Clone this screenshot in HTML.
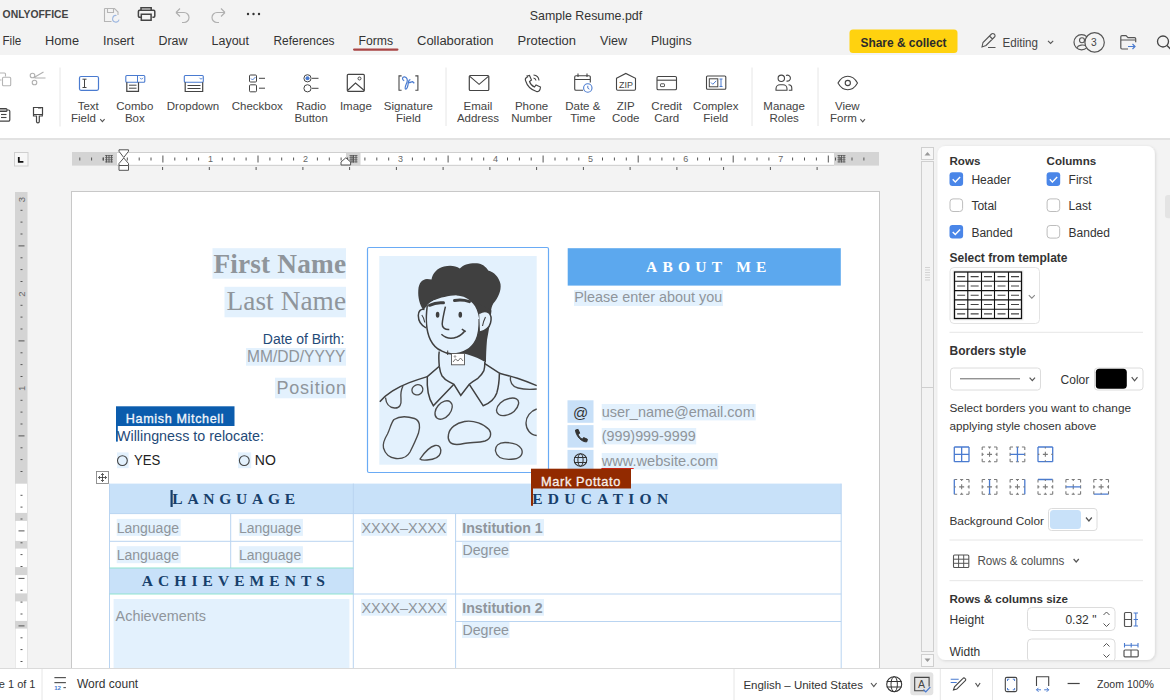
<!DOCTYPE html>
<html><head><meta charset="utf-8"><title>Sample Resume.pdf</title>
<style>
html,body{margin:0;padding:0;width:1170px;height:700px;overflow:hidden;background:#f3f3f3}
svg{display:block;font-family:"Liberation Sans",sans-serif}
</style></head><body>
<svg width="1170" height="700" viewBox="0 0 1170 700">
<rect x="0" y="0" width="1170" height="55" fill="#f3f3f3"/>
<rect x="0" y="55" width="1170" height="83" fill="#fff"/>
<rect x="0" y="138" width="1170" height="2" fill="#e2e2e2"/>
<rect x="0" y="140" width="1170" height="528" fill="#f3f3f3"/>
<text x="2.6" y="18" font-size="10.6" fill="#444" font-weight="bold" textLength="65.8" lengthAdjust="spacingAndGlyphs">ONLYOFFICE</text>
<path d="M104.5,8.5 h10 l3.5,3.5 v3 M104.5,8.5 v13 h7 M107.5,8.5 v4 h6 v-4" fill="none" stroke="#b5b5b5" stroke-width="1.1"/>
<path d="M116.5,15.5 a3.3,3.3 0 1 0 2.6,4.2" fill="none" stroke="#9db7e0" stroke-width="1.1"/>
<path d="M141,10.5 v-2.8 h10.2 v2.8 M140.8,17.3 h-1.2 a1.2,1.2 0 0 1 -1.2,-1.2 v-4.6 a1.2,1.2 0 0 1 1.2,-1.2 h14 a1.2,1.2 0 0 1 1.2,1.2 v4.6 a1.2,1.2 0 0 1 -1.2,1.2 h-1.2 M141.3,14.2 h9.8 v6.1 h-9.8 z" fill="none" stroke="#444" stroke-width="1.5"/>
<path d="M176,12.5 l4,-4 M176,12.5 l4,4 M176,12.5 h8 a5,5 0 0 1 0,10 h-2" fill="none" stroke="#b0b0b0" stroke-width="1.2"/>
<path d="M225,12.5 l-4,-4 M225,12.5 l-4,4 M225,12.5 h-8 a5,5 0 0 0 0,10 h2" fill="none" stroke="#b0b0b0" stroke-width="1.2"/>
<circle cx="248" cy="14" r="1.2" fill="#333" stroke="none" stroke-width="1"/>
<circle cx="253.5" cy="14" r="1.2" fill="#333" stroke="none" stroke-width="1"/>
<circle cx="259" cy="14" r="1.2" fill="#333" stroke="none" stroke-width="1"/>
<text x="586" y="20" font-size="12.4" fill="#333" text-anchor="middle">Sample Resume.pdf</text>
<text x="2.5" y="44.6" font-size="12.5" fill="#333" textLength="18.8" lengthAdjust="spacingAndGlyphs">File</text>
<text x="45" y="44.6" font-size="12.5" fill="#333" textLength="34" lengthAdjust="spacingAndGlyphs">Home</text>
<text x="103" y="44.6" font-size="12.5" fill="#333" textLength="31.2" lengthAdjust="spacingAndGlyphs">Insert</text>
<text x="158.5" y="44.6" font-size="12.5" fill="#333" textLength="29" lengthAdjust="spacingAndGlyphs">Draw</text>
<text x="211.5" y="44.6" font-size="12.5" fill="#333" textLength="37.5" lengthAdjust="spacingAndGlyphs">Layout</text>
<text x="273.5" y="44.6" font-size="12.5" fill="#333" textLength="61" lengthAdjust="spacingAndGlyphs">References</text>
<text x="358.5" y="44.6" font-size="12.5" fill="#333" textLength="34.6" lengthAdjust="spacingAndGlyphs">Forms</text>
<text x="417" y="44.6" font-size="12.5" fill="#333" textLength="76.6" lengthAdjust="spacingAndGlyphs">Collaboration</text>
<text x="517.5" y="44.6" font-size="12.5" fill="#333" textLength="58.5" lengthAdjust="spacingAndGlyphs">Protection</text>
<text x="600" y="44.6" font-size="12.5" fill="#333" textLength="27" lengthAdjust="spacingAndGlyphs">View</text>
<text x="651" y="44.6" font-size="12.5" fill="#333" textLength="40.7" lengthAdjust="spacingAndGlyphs">Plugins</text>
<rect x="353" y="48.4" width="45.5" height="2.3" fill="#a94545" rx="1.1"/>
<rect x="849.5" y="29.5" width="108" height="23.5" fill="#ffd20f" rx="3.5"/>
<text x="903.5" y="46.5" font-size="12" fill="#2b2b2b" font-weight="bold" text-anchor="middle" textLength="86" lengthAdjust="spacingAndGlyphs">Share &amp; collect</text>
<path d="M982,47 l1,-4.5 l8.5,-8.5 a1.8,1.8 0 0 1 2.6,0 l0.4,0.4 a1.8,1.8 0 0 1 0,2.6 l-8.5,8.5 z M989.5,36 l3,3 M988,47.5 h7.5" fill="none" stroke="#555" stroke-width="1.1"/>
<text x="1002.5" y="47.3" font-size="12" fill="#444" textLength="35.5" lengthAdjust="spacingAndGlyphs">Editing</text>
<path d="M1048,40.8 l2.6,2.6 l2.6,-2.6" fill="none" stroke="#555" stroke-width="1.1"/>
<circle cx="1081.6" cy="42.2" r="7.6" fill="none" stroke="#555" stroke-width="1.2"/>
<circle cx="1082" cy="40.2" r="2.5" fill="none" stroke="#555" stroke-width="1.1"/>
<path d="M1077,47.8 a5.5,3.6 0 0 1 9.5,-1.5" fill="none" stroke="#555" stroke-width="1.1"/>
<circle cx="1094.6" cy="42.4" r="9.7" fill="#f3f3f3" stroke="#555" stroke-width="1.2"/>
<text x="1093.8" y="45.8" font-size="10.2" fill="#444" text-anchor="middle">3</text>
<path d="M1128,49 h-6 a1.2,1.2 0 0 1 -1.2,-1.2 v-11 a1.2,1.2 0 0 1 1.2,-1.2 h4 l2,2 h6.5 a1.2,1.2 0 0 1 1.2,1.2 v3.5 M1121,40 h14" fill="none" stroke="#555" stroke-width="1.2"/>
<path d="M1128,46.5 h7 M1132.5,44 l2.5,2.5 l-2.5,2.5" fill="none" stroke="#4a7bd0" stroke-width="1.2"/>
<circle cx="1163" cy="41.5" r="5.5" fill="none" stroke="#444" stroke-width="1.3"/>
<line x1="1167" y1="45.5" x2="1171" y2="49.5" stroke="#444" stroke-width="1.3"/>
<path d="M0,73 h4.5 a1,1 0 0 1 1,1 v2.5" fill="none" stroke="#b5b5b5" stroke-width="1.1"/>
<rect x="2.5" y="77.2" width="8.2" height="8.5" fill="none" stroke="#b5b5b5" stroke-width="1.1" rx="1"/>
<line x1="0" y1="80" x2="1.5" y2="80" stroke="#b5b5b5" stroke-width="1"/>
<circle cx="32.5" cy="75.5" r="2.3" fill="none" stroke="#b0b0b0" stroke-width="1.1"/>
<circle cx="34.5" cy="82.5" r="2.3" fill="none" stroke="#b0b0b0" stroke-width="1.1"/>
<path d="M34,77.5 l9.5,-5.5 M34.5,78 h11" fill="none" stroke="#b0b0b0" stroke-width="1.1"/>
<path d="M0,110 h8.5 a1.3,1.3 0 0 1 1.3,1.3 v8.5 a1.3,1.3 0 0 1 -1.3,1.3 h-8.5" fill="none" stroke="#444" stroke-width="1.2"/>
<rect x="-1" y="108.5" width="8" height="3" fill="none" stroke="#444" stroke-width="1.1" rx="1"/>
<line x1="1" y1="114.5" x2="6.5" y2="114.5" stroke="#444" stroke-width="1.1"/>
<line x1="1" y1="117.5" x2="6.5" y2="117.5" stroke="#444" stroke-width="1.1"/>
<path d="M33.5,107.5 h9 v7 h-9 z M33.5,114.5 v1.5 h3 v5.5 a1.4,1.4 0 0 0 2.8,0 v-5.5 h3 v-1.5" fill="none" stroke="#444" stroke-width="1.2"/>
<path d="M38,108.5 l3.5,0" fill="none" stroke="#888" stroke-width="0.8"/>
<line x1="60" y1="67.5" x2="60" y2="126.5" stroke="#e6e6e6" stroke-width="1"/>
<line x1="446" y1="67.5" x2="446" y2="126" stroke="#e6e6e6" stroke-width="1"/>
<line x1="752" y1="67.5" x2="752" y2="126" stroke="#e6e6e6" stroke-width="1"/>
<line x1="818" y1="67.5" x2="818" y2="126" stroke="#e6e6e6" stroke-width="1"/>
<rect x="79.5" y="76.5" width="19" height="13.8" fill="none" stroke="#4a7bd0" stroke-width="1.2" rx="1.5"/>
<path d="M82.5,79.2 h4 M84.5,79.2 v8.3 M82.5,87.5 h4" fill="none" stroke="#444" stroke-width="1"/>
<rect x="125.8" y="75.5" width="19" height="6.7" fill="none" stroke="#4a7bd0" stroke-width="1.1" rx="1"/>
<line x1="137.5" y1="75.5" x2="137.5" y2="82.2" stroke="#4a7bd0" stroke-width="1"/>
<path d="M140,77.8 l1.5,1.5 l1.5,-1.5" fill="none" stroke="#4a7bd0" stroke-width="0.9"/>
<path d="M126.8,82.2 v9.2 h11.7 v-9.2" fill="none" stroke="#444" stroke-width="1.2"/>
<line x1="129" y1="85.2" x2="136.5" y2="85.2" stroke="#444" stroke-width="1"/>
<line x1="129" y1="88.2" x2="136.5" y2="88.2" stroke="#444" stroke-width="1"/>
<rect x="184.3" y="75.5" width="19" height="6.8" fill="none" stroke="#4a7bd0" stroke-width="1.1" rx="1"/>
<path d="M199.5,77.8 l1.5,1.5 l1.5,-1.5" fill="none" stroke="#4a7bd0" stroke-width="0.9"/>
<path d="M185.2,82.3 v9.2 h17.5 v-9.2" fill="none" stroke="#444" stroke-width="1.2"/>
<line x1="187.5" y1="85.5" x2="200.5" y2="85.5" stroke="#444" stroke-width="1"/>
<line x1="187.5" y1="88.5" x2="200.5" y2="88.5" stroke="#444" stroke-width="1"/>
<rect x="249.5" y="75" width="7" height="7" fill="none" stroke="#444" stroke-width="1" rx="1"/>
<path d="M251,78.5 l1.5,1.5 l3,-3" fill="none" stroke="#4a7bd0" stroke-width="1"/>
<line x1="259" y1="78.3" x2="265" y2="78.3" stroke="#444" stroke-width="1"/>
<rect x="249.5" y="84.8" width="7" height="7" fill="none" stroke="#444" stroke-width="1" rx="1"/>
<line x1="259" y1="88.2" x2="265" y2="88.2" stroke="#444" stroke-width="1"/>
<circle cx="307.5" cy="78.3" r="3.6" fill="none" stroke="#444" stroke-width="1"/>
<circle cx="307.5" cy="78.3" r="2" fill="#4a7bd0" stroke="none" stroke-width="1"/>
<line x1="312" y1="78.3" x2="318.5" y2="78.3" stroke="#444" stroke-width="1"/>
<circle cx="307.5" cy="88.3" r="3.6" fill="none" stroke="#444" stroke-width="1"/>
<line x1="312" y1="88.3" x2="318.5" y2="88.3" stroke="#444" stroke-width="1"/>
<rect x="347.3" y="74.3" width="17" height="17" fill="none" stroke="#444" stroke-width="1.2" rx="1"/>
<path d="M347.5,90.5 l8,-7.5 l8.8,7.5" fill="none" stroke="#444" stroke-width="1.1"/>
<circle cx="359.5" cy="78.5" r="1.5" fill="none" stroke="#444" stroke-width="1"/>
<path d="M401.6,75.9 h-2.6 v14.3 h2.6 M415.3,75.9 h2.6 v14.3 h-2.6" fill="none" stroke="#4a4a4a" stroke-width="1.1"/>
<path d="M404.2,80.8 C401.8,79.8 402,76.6 404.6,76.9 C407,77.2 407.8,79.8 407,82.2 C406,85 404.4,88 405.4,89 C406.8,89.6 408,86.2 408.3,83 C408.6,80.6 409.4,79.2 410.4,80 M408.8,82.6 C410.4,82.8 411.4,81.6 412.6,81.7 L414.3,83.3" fill="none" stroke="#4a7bd0" stroke-width="1.2"/>
<rect x="469.3" y="75.5" width="19.5" height="15" fill="none" stroke="#444" stroke-width="1.2" rx="1"/>
<path d="M469.8,76.3 l9.3,8 l9.3,-8" fill="none" stroke="#444" stroke-width="1.1"/>
<path d="M527,76 l2.5,-0.5 l2,4.5 l-2,1.5 c0.8,2.5 2.5,4.5 5,5.5 l1.5,-2 l4.5,2 l-0.5,2.5 c-0.5,1.5 -2,2.5 -3.5,2 c-5,-1.5 -9.5,-6 -11,-11 c-0.5,-1.5 0.5,-3 2,-3.5 z" fill="none" stroke="#444" stroke-width="1.1"/>
<path d="M533.5,75 a6,6 0 0 1 5.5,5.5 M533.5,78 a3,3 0 0 1 2.5,2.5" fill="none" stroke="#444" stroke-width="1.1"/>
<path d="M583,90.3 h-7 a1.3,1.3 0 0 1 -1.3,-1.3 v-12 a1.3,1.3 0 0 1 1.3,-1.3 h13 a1.3,1.3 0 0 1 1.3,1.3 v5.5 M574.7,79.5 h15.6 M578,73.5 v3.5 M587,73.5 v3.5" fill="none" stroke="#444" stroke-width="1.1"/>
<circle cx="587.8" cy="88" r="4.2" fill="#fff" stroke="#4a7bd0" stroke-width="1.1"/>
<path d="M587.8,85.8 v2.4 l1.6,1" fill="none" stroke="#4a7bd0" stroke-width="1"/>
<path d="M616.5,78.3 l9.3,-4.9 l9.7,4.9 v10.8 a1.2,1.2 0 0 1 -1.2,1.2 h-16.6 a1.2,1.2 0 0 1 -1.2,-1.2 z" fill="none" stroke="#444" stroke-width="1.1"/>
<text x="619.1" y="87.9" font-size="9" fill="#444" textLength="13.9" lengthAdjust="spacingAndGlyphs">ZIP</text>
<rect x="657" y="76.5" width="19.5" height="13.3" fill="none" stroke="#444" stroke-width="1.1" rx="1.3"/>
<line x1="657" y1="80.2" x2="676.5" y2="80.2" stroke="#444" stroke-width="1.1"/>
<rect x="660.5" y="83.8" width="4" height="2.8" fill="none" stroke="#444" stroke-width="0.9" rx="0.5"/>
<rect x="706.5" y="76" width="19.3" height="13.3" fill="none" stroke="#444" stroke-width="1.1" rx="1"/>
<rect x="709.3" y="78.8" width="8.5" height="8" fill="none" stroke="#444" stroke-width="1"/>
<path d="M711,82.5 l1.8,1.8 l3.5,-3.5" fill="none" stroke="#4a7bd0" stroke-width="1"/>
<path d="M719.5,79 h3 M721,79 v7.5 M719.5,86.5 h3" fill="none" stroke="#4a7bd0" stroke-width="1"/>
<circle cx="781.3" cy="78.3" r="3.2" fill="none" stroke="#444" stroke-width="1.1"/>
<path d="M776,90.3 v-1.5 a4,4 0 0 1 4,-4 h3 a4,4 0 0 1 4,4 v1.5 z" fill="none" stroke="#444" stroke-width="1.1"/>
<path d="M786,75.5 a3,3 0 1 1 0.5,5.5 M788.5,84.8 a3.5,3.5 0 0 1 3.3,3.5 v2 h-3" fill="none" stroke="#444" stroke-width="1.1"/>
<path d="M838,83 c5,-9 14.5,-9 19.5,0 c-5,9 -14.5,9 -19.5,0 z" fill="none" stroke="#444" stroke-width="1.1"/>
<circle cx="847.8" cy="83" r="2.6" fill="none" stroke="#444" stroke-width="1.1"/>
<text x="88.2" y="110.0" font-size="11.5" fill="#444" text-anchor="middle">Text</text>
<text x="71" y="121.6" font-size="11.5" fill="#444">Field</text>
<path d="M100.2,119.2 l2.2,2.4 l2.2,-2.4" fill="none" stroke="#555" stroke-width="1.1"/>
<text x="134.8" y="110.0" font-size="11.5" fill="#444" text-anchor="middle">Combo</text>
<text x="134.8" y="121.6" font-size="11.5" fill="#444" text-anchor="middle">Box</text>
<text x="193" y="110.0" font-size="11.5" fill="#444" text-anchor="middle">Dropdown</text>
<text x="257.3" y="110.0" font-size="11.5" fill="#444" text-anchor="middle">Checkbox</text>
<text x="311.2" y="110.0" font-size="11.5" fill="#444" text-anchor="middle">Radio</text>
<text x="311.2" y="121.6" font-size="11.5" fill="#444" text-anchor="middle">Button</text>
<text x="355.9" y="110.0" font-size="11.5" fill="#444" text-anchor="middle">Image</text>
<text x="408.4" y="110.0" font-size="11.5" fill="#444" text-anchor="middle">Signature</text>
<text x="408.4" y="121.6" font-size="11.5" fill="#444" text-anchor="middle">Field</text>
<text x="478" y="110.0" font-size="11.5" fill="#444" text-anchor="middle">Email</text>
<text x="478" y="121.6" font-size="11.5" fill="#444" text-anchor="middle">Address</text>
<text x="531.6" y="110.0" font-size="11.5" fill="#444" text-anchor="middle">Phone</text>
<text x="531.6" y="121.6" font-size="11.5" fill="#444" text-anchor="middle">Number</text>
<text x="582.8" y="110.0" font-size="11.5" fill="#444" text-anchor="middle">Date &amp;</text>
<text x="582.8" y="121.6" font-size="11.5" fill="#444" text-anchor="middle">Time</text>
<text x="625.7" y="110.0" font-size="11.5" fill="#444" text-anchor="middle">ZIP</text>
<text x="625.7" y="121.6" font-size="11.5" fill="#444" text-anchor="middle">Code</text>
<text x="666.7" y="110.0" font-size="11.5" fill="#444" text-anchor="middle">Credit</text>
<text x="666.7" y="121.6" font-size="11.5" fill="#444" text-anchor="middle">Card</text>
<text x="715.8" y="110.0" font-size="11.5" fill="#444" text-anchor="middle">Complex</text>
<text x="715.8" y="121.6" font-size="11.5" fill="#444" text-anchor="middle">Field</text>
<text x="784.1" y="110.0" font-size="11.5" fill="#444" text-anchor="middle">Manage</text>
<text x="784.1" y="121.6" font-size="11.5" fill="#444" text-anchor="middle">Roles</text>
<text x="847.3" y="110.0" font-size="11.5" fill="#444" text-anchor="middle">View</text>
<text x="830" y="121.6" font-size="11.5" fill="#444">Form</text>
<path d="M860.4,119.2 l2.3,2.6 l2.3,-2.6" fill="none" stroke="#555" stroke-width="1.1"/>
<rect x="14.5" y="152.5" width="13.5" height="13.5" fill="#f7f7f7" stroke="#cfcfcf" stroke-width="1"/>
<path d="M18.8,157 v4.8 h4.6" fill="none" stroke="#111" stroke-width="1.8"/>
<rect x="72" y="152" width="807" height="13.6" fill="#d4d4d4"/>
<rect x="117" y="152.5" width="717" height="12.6" fill="#fff"/>
<line x1="117" y1="152.5" x2="834" y2="152.5" stroke="#cfcfcf" stroke-width="1"/>
<line x1="117" y1="165.3" x2="834" y2="165.3" stroke="#cfcfcf" stroke-width="1"/>
<rect x="346" y="152.5" width="14.5" height="12.6" fill="#d4d4d4"/>
<line x1="79.8" y1="157.5" x2="79.8" y2="160.5" stroke="#555" stroke-width="1"/>
<line x1="91.6" y1="157.5" x2="91.6" y2="160.5" stroke="#555" stroke-width="1"/>
<line x1="103.5" y1="157.5" x2="103.5" y2="160.5" stroke="#555" stroke-width="1"/>
<line x1="127.3" y1="157.5" x2="127.3" y2="160.5" stroke="#555" stroke-width="1"/>
<line x1="139.2" y1="157.5" x2="139.2" y2="160.5" stroke="#555" stroke-width="1"/>
<line x1="151.0" y1="157.5" x2="151.0" y2="160.5" stroke="#555" stroke-width="1"/>
<line x1="162.9" y1="155.5" x2="162.9" y2="162.5" stroke="#555" stroke-width="1"/>
<line x1="174.8" y1="157.5" x2="174.8" y2="160.5" stroke="#555" stroke-width="1"/>
<line x1="186.7" y1="157.5" x2="186.7" y2="160.5" stroke="#555" stroke-width="1"/>
<line x1="198.6" y1="157.5" x2="198.6" y2="160.5" stroke="#555" stroke-width="1"/>
<text x="210.4" y="162.2" font-size="9" fill="#666" text-anchor="middle">1</text>
<line x1="222.3" y1="157.5" x2="222.3" y2="160.5" stroke="#555" stroke-width="1"/>
<line x1="234.2" y1="157.5" x2="234.2" y2="160.5" stroke="#555" stroke-width="1"/>
<line x1="246.1" y1="157.5" x2="246.1" y2="160.5" stroke="#555" stroke-width="1"/>
<line x1="258.0" y1="155.5" x2="258.0" y2="162.5" stroke="#555" stroke-width="1"/>
<line x1="269.9" y1="157.5" x2="269.9" y2="160.5" stroke="#555" stroke-width="1"/>
<line x1="281.7" y1="157.5" x2="281.7" y2="160.5" stroke="#555" stroke-width="1"/>
<line x1="293.6" y1="157.5" x2="293.6" y2="160.5" stroke="#555" stroke-width="1"/>
<text x="305.5" y="162.2" font-size="9" fill="#666" text-anchor="middle">2</text>
<line x1="317.4" y1="157.5" x2="317.4" y2="160.5" stroke="#555" stroke-width="1"/>
<line x1="329.3" y1="157.5" x2="329.3" y2="160.5" stroke="#555" stroke-width="1"/>
<line x1="341.1" y1="157.5" x2="341.1" y2="160.5" stroke="#555" stroke-width="1"/>
<line x1="353.0" y1="155.5" x2="353.0" y2="162.5" stroke="#555" stroke-width="1"/>
<line x1="364.9" y1="157.5" x2="364.9" y2="160.5" stroke="#555" stroke-width="1"/>
<line x1="376.8" y1="157.5" x2="376.8" y2="160.5" stroke="#555" stroke-width="1"/>
<line x1="388.7" y1="157.5" x2="388.7" y2="160.5" stroke="#555" stroke-width="1"/>
<text x="400.5" y="162.2" font-size="9" fill="#666" text-anchor="middle">3</text>
<line x1="412.4" y1="157.5" x2="412.4" y2="160.5" stroke="#555" stroke-width="1"/>
<line x1="424.3" y1="157.5" x2="424.3" y2="160.5" stroke="#555" stroke-width="1"/>
<line x1="436.2" y1="157.5" x2="436.2" y2="160.5" stroke="#555" stroke-width="1"/>
<line x1="448.1" y1="155.5" x2="448.1" y2="162.5" stroke="#555" stroke-width="1"/>
<line x1="460.0" y1="157.5" x2="460.0" y2="160.5" stroke="#555" stroke-width="1"/>
<line x1="471.8" y1="157.5" x2="471.8" y2="160.5" stroke="#555" stroke-width="1"/>
<line x1="483.7" y1="157.5" x2="483.7" y2="160.5" stroke="#555" stroke-width="1"/>
<text x="495.6" y="162.2" font-size="9" fill="#666" text-anchor="middle">4</text>
<line x1="507.5" y1="157.5" x2="507.5" y2="160.5" stroke="#555" stroke-width="1"/>
<line x1="519.4" y1="157.5" x2="519.4" y2="160.5" stroke="#555" stroke-width="1"/>
<line x1="531.2" y1="157.5" x2="531.2" y2="160.5" stroke="#555" stroke-width="1"/>
<line x1="543.1" y1="155.5" x2="543.1" y2="162.5" stroke="#555" stroke-width="1"/>
<line x1="555.0" y1="157.5" x2="555.0" y2="160.5" stroke="#555" stroke-width="1"/>
<line x1="566.9" y1="157.5" x2="566.9" y2="160.5" stroke="#555" stroke-width="1"/>
<line x1="578.8" y1="157.5" x2="578.8" y2="160.5" stroke="#555" stroke-width="1"/>
<text x="590.6" y="162.2" font-size="9" fill="#666" text-anchor="middle">5</text>
<line x1="602.5" y1="157.5" x2="602.5" y2="160.5" stroke="#555" stroke-width="1"/>
<line x1="614.4" y1="157.5" x2="614.4" y2="160.5" stroke="#555" stroke-width="1"/>
<line x1="626.3" y1="157.5" x2="626.3" y2="160.5" stroke="#555" stroke-width="1"/>
<line x1="638.2" y1="155.5" x2="638.2" y2="162.5" stroke="#555" stroke-width="1"/>
<line x1="650.1" y1="157.5" x2="650.1" y2="160.5" stroke="#555" stroke-width="1"/>
<line x1="661.9" y1="157.5" x2="661.9" y2="160.5" stroke="#555" stroke-width="1"/>
<line x1="673.8" y1="157.5" x2="673.8" y2="160.5" stroke="#555" stroke-width="1"/>
<text x="685.7" y="162.2" font-size="9" fill="#666" text-anchor="middle">6</text>
<line x1="697.6" y1="157.5" x2="697.6" y2="160.5" stroke="#555" stroke-width="1"/>
<line x1="709.5" y1="157.5" x2="709.5" y2="160.5" stroke="#555" stroke-width="1"/>
<line x1="721.3" y1="157.5" x2="721.3" y2="160.5" stroke="#555" stroke-width="1"/>
<line x1="733.2" y1="155.5" x2="733.2" y2="162.5" stroke="#555" stroke-width="1"/>
<line x1="745.1" y1="157.5" x2="745.1" y2="160.5" stroke="#555" stroke-width="1"/>
<line x1="757.0" y1="157.5" x2="757.0" y2="160.5" stroke="#555" stroke-width="1"/>
<line x1="768.9" y1="157.5" x2="768.9" y2="160.5" stroke="#555" stroke-width="1"/>
<text x="780.8" y="162.2" font-size="9" fill="#666" text-anchor="middle">7</text>
<line x1="792.6" y1="157.5" x2="792.6" y2="160.5" stroke="#555" stroke-width="1"/>
<line x1="804.5" y1="157.5" x2="804.5" y2="160.5" stroke="#555" stroke-width="1"/>
<line x1="816.4" y1="157.5" x2="816.4" y2="160.5" stroke="#555" stroke-width="1"/>
<line x1="828.3" y1="155.5" x2="828.3" y2="162.5" stroke="#555" stroke-width="1"/>
<line x1="840.2" y1="157.5" x2="840.2" y2="160.5" stroke="#555" stroke-width="1"/>
<line x1="852.0" y1="157.5" x2="852.0" y2="160.5" stroke="#555" stroke-width="1"/>
<line x1="863.9" y1="157.5" x2="863.9" y2="160.5" stroke="#555" stroke-width="1"/>
<line x1="106.5" y1="155" x2="106.5" y2="162.5" stroke="#555" stroke-width="0.9"/>
<line x1="109.0" y1="155" x2="109.0" y2="162.5" stroke="#555" stroke-width="0.9"/>
<line x1="111.5" y1="155" x2="111.5" y2="162.5" stroke="#555" stroke-width="0.9"/>
<line x1="105" y1="155.6" x2="113" y2="155.6" stroke="#555" stroke-width="0.8"/>
<line x1="105" y1="157.7" x2="113" y2="157.7" stroke="#555" stroke-width="0.8"/>
<line x1="105" y1="159.79999999999998" x2="113" y2="159.79999999999998" stroke="#555" stroke-width="0.8"/>
<line x1="105" y1="161.9" x2="113" y2="161.9" stroke="#555" stroke-width="0.8"/>
<line x1="103" y1="157.5" x2="103" y2="160.5" stroke="#555" stroke-width="1"/>
<line x1="351.0" y1="155" x2="351.0" y2="162.5" stroke="#555" stroke-width="0.9"/>
<line x1="353.5" y1="155" x2="353.5" y2="162.5" stroke="#555" stroke-width="0.9"/>
<line x1="356.0" y1="155" x2="356.0" y2="162.5" stroke="#555" stroke-width="0.9"/>
<line x1="349.5" y1="155.6" x2="357.5" y2="155.6" stroke="#555" stroke-width="0.8"/>
<line x1="349.5" y1="157.7" x2="357.5" y2="157.7" stroke="#555" stroke-width="0.8"/>
<line x1="349.5" y1="159.79999999999998" x2="357.5" y2="159.79999999999998" stroke="#555" stroke-width="0.8"/>
<line x1="349.5" y1="161.9" x2="357.5" y2="161.9" stroke="#555" stroke-width="0.8"/>
<line x1="347.5" y1="157.5" x2="347.5" y2="160.5" stroke="#555" stroke-width="1"/>
<line x1="839.0" y1="155" x2="839.0" y2="162.5" stroke="#555" stroke-width="0.9"/>
<line x1="841.5" y1="155" x2="841.5" y2="162.5" stroke="#555" stroke-width="0.9"/>
<line x1="844.0" y1="155" x2="844.0" y2="162.5" stroke="#555" stroke-width="0.9"/>
<line x1="837.5" y1="155.6" x2="845.5" y2="155.6" stroke="#555" stroke-width="0.8"/>
<line x1="837.5" y1="157.7" x2="845.5" y2="157.7" stroke="#555" stroke-width="0.8"/>
<line x1="837.5" y1="159.79999999999998" x2="845.5" y2="159.79999999999998" stroke="#555" stroke-width="0.8"/>
<line x1="837.5" y1="161.9" x2="845.5" y2="161.9" stroke="#555" stroke-width="0.8"/>
<line x1="835.5" y1="157.5" x2="835.5" y2="160.5" stroke="#555" stroke-width="1"/>
<path d="M119,149.8 h9.5 v1.5 l-4.75,6.2 l-4.75,-6.2 z M119,163.5 l4.75,-5.5 l4.75,5.5 v2 h-9.5 z M119,165.5 v4.8 h9.5 v-4.8" fill="#fff" stroke="#555" stroke-width="1"/>
<path d="M341,165 v-3 l4.8,-4.2 l4.8,4.2 v3 z" fill="#fff" stroke="#555" stroke-width="1"/>
<line x1="162.6" y1="167" x2="162.6" y2="170" stroke="#555" stroke-width="1"/>
<line x1="209.3" y1="167" x2="209.3" y2="170" stroke="#555" stroke-width="1"/>
<line x1="256.1" y1="167" x2="256.1" y2="170" stroke="#555" stroke-width="1"/>
<line x1="302.9" y1="167" x2="302.9" y2="170" stroke="#555" stroke-width="1"/>
<line x1="349.6" y1="167" x2="349.6" y2="170" stroke="#555" stroke-width="1"/>
<line x1="396.4" y1="167" x2="396.4" y2="170" stroke="#555" stroke-width="1"/>
<line x1="443.1" y1="167" x2="443.1" y2="170" stroke="#555" stroke-width="1"/>
<line x1="489.9" y1="167" x2="489.9" y2="170" stroke="#555" stroke-width="1"/>
<line x1="536.6" y1="167" x2="536.6" y2="170" stroke="#555" stroke-width="1"/>
<line x1="583.4" y1="167" x2="583.4" y2="170" stroke="#555" stroke-width="1"/>
<line x1="630.1" y1="167" x2="630.1" y2="170" stroke="#555" stroke-width="1"/>
<line x1="676.9" y1="167" x2="676.9" y2="170" stroke="#555" stroke-width="1"/>
<line x1="723.6" y1="167" x2="723.6" y2="170" stroke="#555" stroke-width="1"/>
<line x1="770.4" y1="167" x2="770.4" y2="170" stroke="#555" stroke-width="1"/>
<line x1="817.1" y1="167" x2="817.1" y2="170" stroke="#555" stroke-width="1"/>
<rect x="15" y="192" width="12.5" height="476" fill="#d4d4d4"/>
<rect x="15.5" y="483.7" width="11.5" height="29.19999999999999" fill="#fff"/>
<rect x="15.5" y="520.9" width="11.5" height="20.0" fill="#fff"/>
<rect x="15.5" y="548.6" width="11.5" height="18.5" fill="#fff"/>
<rect x="15.5" y="575.1" width="11.5" height="18.299999999999955" fill="#fff"/>
<rect x="15.5" y="601.4" width="11.5" height="19.5" fill="#fff"/>
<rect x="15.5" y="628.6" width="11.5" height="39.39999999999998" fill="#fff"/>
<text x="21.3" y="199.5" font-size="9.5" fill="#666" text-anchor="middle" transform="rotate(-90 21.3 199.5)" dy="3.3">3</text>
<text x="21.3" y="294.2" font-size="9.5" fill="#666" text-anchor="middle" transform="rotate(-90 21.3 294.2)" dy="3.3">2</text>
<text x="21.3" y="388.4" font-size="9.5" fill="#666" text-anchor="middle" transform="rotate(-90 21.3 388.4)" dy="3.3">1</text>
<line x1="20.5" y1="471.5" x2="22.5" y2="471.5" stroke="#555" stroke-width="1"/>
<line x1="20.5" y1="459.6" x2="22.5" y2="459.6" stroke="#555" stroke-width="1"/>
<line x1="20.5" y1="447.8" x2="22.5" y2="447.8" stroke="#555" stroke-width="1"/>
<line x1="18.5" y1="435.9" x2="24.5" y2="435.9" stroke="#555" stroke-width="1"/>
<line x1="20.5" y1="424.0" x2="22.5" y2="424.0" stroke="#555" stroke-width="1"/>
<line x1="20.5" y1="412.1" x2="22.5" y2="412.1" stroke="#555" stroke-width="1"/>
<line x1="20.5" y1="400.3" x2="22.5" y2="400.3" stroke="#555" stroke-width="1"/>
<line x1="20.5" y1="376.5" x2="22.5" y2="376.5" stroke="#555" stroke-width="1"/>
<line x1="20.5" y1="364.6" x2="22.5" y2="364.6" stroke="#555" stroke-width="1"/>
<line x1="20.5" y1="352.8" x2="22.5" y2="352.8" stroke="#555" stroke-width="1"/>
<line x1="18.5" y1="340.9" x2="24.5" y2="340.9" stroke="#555" stroke-width="1"/>
<line x1="20.5" y1="329.0" x2="22.5" y2="329.0" stroke="#555" stroke-width="1"/>
<line x1="20.5" y1="317.1" x2="22.5" y2="317.1" stroke="#555" stroke-width="1"/>
<line x1="20.5" y1="305.3" x2="22.5" y2="305.3" stroke="#555" stroke-width="1"/>
<line x1="20.5" y1="281.5" x2="22.5" y2="281.5" stroke="#555" stroke-width="1"/>
<line x1="20.5" y1="269.6" x2="22.5" y2="269.6" stroke="#555" stroke-width="1"/>
<line x1="20.5" y1="257.8" x2="22.5" y2="257.8" stroke="#555" stroke-width="1"/>
<line x1="18.5" y1="245.9" x2="24.5" y2="245.9" stroke="#555" stroke-width="1"/>
<line x1="20.5" y1="234.0" x2="22.5" y2="234.0" stroke="#555" stroke-width="1"/>
<line x1="20.5" y1="222.1" x2="22.5" y2="222.1" stroke="#555" stroke-width="1"/>
<line x1="20.5" y1="210.3" x2="22.5" y2="210.3" stroke="#555" stroke-width="1"/>
<line x1="20.5" y1="495.3" x2="22.5" y2="495.3" stroke="#555" stroke-width="1"/>
<line x1="20.5" y1="507.1" x2="22.5" y2="507.1" stroke="#555" stroke-width="1"/>
<line x1="20.5" y1="519.0" x2="22.5" y2="519.0" stroke="#555" stroke-width="1"/>
<line x1="18.5" y1="530.9" x2="24.5" y2="530.9" stroke="#555" stroke-width="1"/>
<line x1="20.5" y1="542.8" x2="22.5" y2="542.8" stroke="#555" stroke-width="1"/>
<line x1="20.5" y1="554.6" x2="22.5" y2="554.6" stroke="#555" stroke-width="1"/>
<line x1="20.5" y1="566.5" x2="22.5" y2="566.5" stroke="#555" stroke-width="1"/>
<line x1="18.5" y1="578.4" x2="24.5" y2="578.4" stroke="#555" stroke-width="1"/>
<line x1="20.5" y1="590.3" x2="22.5" y2="590.3" stroke="#555" stroke-width="1"/>
<line x1="20.5" y1="602.1" x2="22.5" y2="602.1" stroke="#555" stroke-width="1"/>
<line x1="20.5" y1="614.0" x2="22.5" y2="614.0" stroke="#555" stroke-width="1"/>
<line x1="18.5" y1="625.9" x2="24.5" y2="625.9" stroke="#555" stroke-width="1"/>
<line x1="20.5" y1="637.8" x2="22.5" y2="637.8" stroke="#555" stroke-width="1"/>
<line x1="20.5" y1="649.6" x2="22.5" y2="649.6" stroke="#555" stroke-width="1"/>
<line x1="20.5" y1="661.5" x2="22.5" y2="661.5" stroke="#555" stroke-width="1"/>
<rect x="71.5" y="191.5" width="808" height="480" fill="#fff" stroke="#c8c8c8" stroke-width="1"/>
<rect x="212.5" y="248.2" width="133.5" height="30.5" fill="#e3f1fd"/>
<text x="346" y="272.8" font-size="27.3" fill="#8f959b" font-weight="bold" font-family="Liberation Serif" text-anchor="end" textLength="132.5" lengthAdjust="spacing">First Name</text>
<rect x="224.5" y="286.8" width="121.5" height="30.5" fill="#e3f1fd"/>
<text x="346" y="310.4" font-size="27.3" fill="#8f959b" font-family="Liberation Serif" text-anchor="end" textLength="119.5" lengthAdjust="spacing">Last Name</text>
<text x="344.5" y="343.8" font-size="14" fill="#1f4a78" text-anchor="end">Date of Birth:</text>
<rect x="246" y="348" width="100" height="17.7" fill="#e3f1fd"/>
<text x="345.5" y="361.7" font-size="15.8" fill="#8f959b" text-anchor="end" textLength="98.5" lengthAdjust="spacingAndGlyphs">MM/DD/YYYY</text>
<rect x="275" y="377.7" width="71" height="20.6" fill="#e3f1fd"/>
<text x="346" y="394" font-size="18" fill="#8f959b" text-anchor="end" textLength="69.5" lengthAdjust="spacing">Position</text>
<rect x="367.5" y="247.5" width="181" height="225" fill="#fff" stroke="#6aabf5" stroke-width="1.2" rx="1.5"/>
<rect x="379.3" y="256" width="157.4" height="208.7" fill="#e3f1fd"/>
<path d="M423.4,310 C419.5,305 417.8,297 418.3,290 C418.8,283 422,279.5 427,279 L431.5,279.5 C432.5,273 437.5,268 444,266.5 C450,265 455.5,265.5 459.8,268.6 C463,264.5 470,262.8 477,263.2 C482,263.8 486,266.5 488.2,270.5 C494,272 499,277 500.5,284 C501.5,291 498,298 493.3,303.6 C491.8,306.5 491.2,309 491,311.5 L479.2,319.3 L472.9,303.6 L456,295.5 L433.6,300.5 L427.3,305.2 Z" fill="#404040" stroke="none" stroke-width="1"/>
<path d="M470,300 L491.5,310.5 C490,322 489,330 487,340 C486.3,348 486,356 486,362.5 C479,358 471,355 458,352 L470,330 Z" fill="#404040" stroke="none" stroke-width="1"/>
<path d="M427.3,305.2 C426.5,312 426,319 426.5,324 C427,331 428.5,336 430.4,339.8 C433,345 437,349 441.4,350.8 C444.5,352.5 448,353.8 452,354 C458,354 463,352.5 467,350 C471,347.5 474,344 476,340 C478.5,335 479.5,329 479.2,319 C478,312 476,307 472.9,303.6 C468,298 464,296 456,295.5 C449,295.5 440,297.5 433.6,300.5 C430,302 428,304 427.3,305.2 Z" fill="#e3f1fd" stroke="none" stroke-width="1"/>
<path d="M427.3,305.2 C426.5,312 426,319 426.5,324 C427,331 428.5,336 430.4,339.8 C433,345 437,349 441.4,350.8 C444.5,352.5 448,353.8 452,354 C458,354 463,352.5 467,350 C471,347.5 474,344 476,340 C478.5,335 479.5,329 479.2,319" fill="none" stroke="#404040" stroke-width="1.5"/>
<path d="M424.5,309.5 C420.5,308.5 418.3,311.5 418.3,315.5 C418.3,320.5 420.5,325 426,327.8" fill="#e3f1fd" stroke="#404040" stroke-width="1.5"/>
<path d="M421.8,315 C423.5,317 424.3,320 424.8,322.5" fill="none" stroke="#404040" stroke-width="1.1"/>
<path d="M479.2,313.5 C482,311.5 486,311 488.5,312.5 C491,314.5 491.5,319 490.5,323 C489.5,327 486,330.5 480,332" fill="#e3f1fd" stroke="#404040" stroke-width="1.5"/>
<path d="M485.5,317 C484,320 483,323 482.5,326" fill="none" stroke="#404040" stroke-width="1.1"/>
<path d="M429.5,305.3 C434,303 439,302.3 443.5,302.8" fill="none" stroke="#404040" stroke-width="3" stroke-linecap="round"/>
<path d="M454.5,300.6 C459,299.8 465,300.2 469.5,301.6" fill="none" stroke="#404040" stroke-width="3" stroke-linecap="round"/>
<ellipse cx="437.6" cy="314.8" rx="1.8" ry="3" fill="#404040"/>
<ellipse cx="460.3" cy="314.8" rx="1.8" ry="3" fill="#404040"/>
<path d="M445.4,306.7 C444,313 442.5,319 442.2,324 C442,328 445.5,330 449.3,329.5" fill="none" stroke="#404040" stroke-width="1.5"/>
<path d="M441.4,334.3 C446,338.5 452,339 457,337 C460.5,335.5 463.5,333 465,330.5 M461.8,329.2 L465.8,331.6" fill="none" stroke="#404040" stroke-width="1.5"/>
<path d="M439.2,351.5 C438.6,356 438.8,361 439.3,366.3" fill="none" stroke="#404040" stroke-width="1.5"/>
<path d="M447.7,350.5 v4.5" fill="none" stroke="#404040" stroke-width="1"/>
<path d="M484.8,362 v2" fill="none" stroke="#404040" stroke-width="1.5"/>
<path d="M439.3,366.3 C440,371 441,374 441.9,375.7 C444,378.5 446.5,380.5 448.8,381.7 L453.9,384.3 L460.8,395.5 L469.3,384.3 C472,382 475,380 477.9,378.3 C480.5,376 482.5,373.5 483.9,370.6 C484.5,368.5 484.8,366 484.8,363.7" fill="none" stroke="#404040" stroke-width="1.5"/>
<path d="M439.3,366.3 L427.3,376.6 C427,383 427.3,388 428.2,392.9 C429,397.5 431,402 433.3,405.7 L453.9,384.3" fill="none" stroke="#404040" stroke-width="1.5"/>
<path d="M484.8,363.7 L499.4,373.2 C499.3,380 498.5,387 496.8,392.9 C495,398 490,403 483.1,405.7 L469.3,384.3" fill="none" stroke="#404040" stroke-width="1.5"/>
<path d="M427.3,376.6 C421,378.5 415,380.5 409.3,382.6 C403,385 397,388 392.2,391.2 C387,394.5 383,398 379.8,401.8" fill="none" stroke="#404040" stroke-width="1.5"/>
<path d="M499.4,373.2 C505.5,374.8 511.5,376.5 517.4,378.3 C524,380.5 530,382.8 536.7,385.6" fill="none" stroke="#404040" stroke-width="1.5"/>
<path d="M385.5,397.5 C386,403 389,407.5 394.5,408 C400,408.5 401.5,404 401,399 C400.5,394.5 401,390 403,386" fill="none" stroke="#4a4a4a" stroke-width="1.35"/>
<ellipse cx="417.4" cy="389.8" rx="5.6" ry="5" fill="none" stroke="#4a4a4a" stroke-width="1.35" transform="rotate(-25 417.4 389.8)"/>
<ellipse cx="443.6" cy="410" rx="10.5" ry="7" fill="none" stroke="#4a4a4a" stroke-width="1.35" transform="rotate(-50 443.6 410)"/>
<path d="M394,419.5 C399.5,416 408,416.5 414.5,418.5 C420,420.5 420.5,427 418.5,433 C416,440 412.5,447 410,452 C407,457.5 402,459 396,458.5 C389.5,458 385,453.5 383.5,448 C382.5,444 384.5,439 387.5,434 C390,429 391,423 394,419.5 Z" fill="none" stroke="#4a4a4a" stroke-width="1.35"/>
<path d="M420,459 C424,453 429,447 435,445.5 C440,444.5 441.5,449 440.5,453 C439.5,457 434,459.5 427,460 C423.5,460.3 421,460 420,459 Z" fill="none" stroke="#4a4a4a" stroke-width="1.35"/>
<path d="M448.5,434.5 C449.5,428 456,423 464.5,421.5 C474,420 484,424 489,429.5 C492,433.5 491,439 485,441 C478,443 470,442 464,443.5 C458,445 452,445 449.5,441.5 C448,439.5 448,437 448.5,434.5 Z" fill="none" stroke="#4a4a4a" stroke-width="1.35"/>
<path d="M496.5,410 C497,405 502,400 509,398.5 C515,397 519.5,399 518.5,404 C517.5,409.5 512,414.5 505,415.5 C500,416.3 496.3,414 496.5,410 Z" fill="none" stroke="#4a4a4a" stroke-width="1.35"/>
<path d="M495.5,451 C495,446 498.5,442.5 505,442.5 C512,442.5 519,444.5 521.5,449 C523.5,453.5 521,458 514,459 C506,460 497,459 495.5,451 Z" fill="none" stroke="#4a4a4a" stroke-width="1.35"/>
<path d="M536.7,409 C530.5,411 526,416.5 526,423 C526,429.5 530.5,435 536.7,435.5" fill="none" stroke="#4a4a4a" stroke-width="1.35"/>
<path d="M510.5,376.5 C509.5,381.5 512,386.5 518,388 C524,389.5 531,389.5 536.7,389" fill="none" stroke="#4a4a4a" stroke-width="1.35"/>
<rect x="451.5" y="353.5" width="13" height="11.3" fill="#fff" stroke="#555" stroke-width="0.9"/>
<path d="M453,362 l2.5,-3 l2.5,2 l2.5,-3 l2.5,3" fill="none" stroke="#555" stroke-width="0.8"/>
<circle cx="455" cy="356.5" r="0.8" fill="none" stroke="#555" stroke-width="0.6"/>
<rect x="567.7" y="248.2" width="273.1" height="37.4" fill="#5ca8ee"/>
<text x="646" y="272" font-size="15.5" fill="#fff" font-weight="bold" font-family="Liberation Serif" letter-spacing="5.25">ABOUT ME</text>
<rect x="574" y="290" width="149" height="16" fill="#e3f1fd"/>
<text x="574.2" y="302.3" font-size="14.4" fill="#8f959b">Please enter about you</text>
<rect x="567.5" y="400.3" width="26" height="22.5" fill="#c8e0f8"/>
<rect x="567.5" y="425.1" width="26" height="22.5" fill="#c8e0f8"/>
<rect x="567.5" y="449.9" width="26" height="22.5" fill="#c8e0f8"/>
<rect x="601.7" y="404" width="154" height="16.4" fill="#e3f1fd"/>
<text x="601.7" y="417.2" font-size="14.5" fill="#8f959b" textLength="153" lengthAdjust="spacingAndGlyphs">user_name@email.com</text>
<rect x="601.7" y="428" width="94.5" height="16.4" fill="#e3f1fd"/>
<text x="601.7" y="441" font-size="14.5" fill="#8f959b" textLength="94" lengthAdjust="spacingAndGlyphs">(999)999-9999</text>
<rect x="601.7" y="453" width="116.5" height="16.4" fill="#e3f1fd"/>
<text x="601.7" y="466.1" font-size="14.5" fill="#8f959b" textLength="116" lengthAdjust="spacingAndGlyphs">www.website.com</text>
<text x="580.5" y="417.5" font-size="15" fill="#333" text-anchor="middle">@</text>
<path d="M575.5,430 l2.6,-0.6 l1.6,3.8 l-1.6,1.2 c0.8,2.2 2.2,3.8 4.2,4.8 l1.3,-1.6 l3.8,1.6 l-0.6,2.6 c-4.5,0.8 -11,-5.5 -11.3,-11.8 z" fill="#333" stroke="#333" stroke-width="1"/>
<circle cx="580.5" cy="460" r="6.3" fill="none" stroke="#333" stroke-width="1.1"/>
<ellipse cx="580.5" cy="460" rx="2.6" ry="6.3" fill="none" stroke="#333" stroke-width="1"/>
<line x1="574.2" y1="457.5" x2="586.8" y2="457.5" stroke="#333" stroke-width="1"/>
<line x1="574.2" y1="462.5" x2="586.8" y2="462.5" stroke="#333" stroke-width="1"/>
<line x1="601.4" y1="468.5" x2="633.7" y2="468.5" stroke="#e02020" stroke-width="1.2"/>
<rect x="116" y="406.3" width="118.5" height="19.7" fill="#0b5cad"/>
<text x="125.8" y="423" font-size="12.6" fill="#f2f6fb" textLength="97.8" lengthAdjust="spacing" stroke="#f2f6fb" stroke-width="0.3">Hamish Mitchell</text>
<rect x="116" y="426" width="1.8" height="15.6" fill="#0b5cad"/>
<text x="117" y="441" font-size="14.3" fill="#1f4a78">Willingness to relocate:</text>
<rect x="117" y="452.4" width="11.6" height="15.8" fill="#e3f1fd"/>
<circle cx="122.4" cy="460.6" r="4.9" fill="none" stroke="#444" stroke-width="1.1"/>
<text x="134" y="465" font-size="14" fill="#222" textLength="26.4" lengthAdjust="spacingAndGlyphs">YES</text>
<rect x="238" y="452.4" width="13.2" height="15.8" fill="#e3f1fd"/>
<circle cx="244.3" cy="460.6" r="4.9" fill="none" stroke="#444" stroke-width="1.1"/>
<text x="254.8" y="465" font-size="14" fill="#222">NO</text>
<rect x="96.5" y="471.5" width="12" height="12" fill="#fff" stroke="#888" stroke-width="0.9"/>
<path d="M102.5,473.5 v8 M98.5,477.5 h8 M101,475 l1.5,-1.5 l1.5,1.5 M101,480 l1.5,1.5 l1.5,-1.5 M100,476 l-1.5,1.5 l1.5,1.5 M105,476 l1.5,1.5 l-1.5,1.5" fill="none" stroke="#333" stroke-width="0.8"/>
<rect x="109.5" y="483.6" width="731.7" height="30" fill="#c8e1f9"/>
<rect x="109.5" y="568" width="243.8" height="26" fill="#c8e1f9"/>
<rect x="113.6" y="599" width="235.8" height="75" fill="#e3f1fd"/>
<line x1="109.5" y1="483.6" x2="109.5" y2="700" stroke="#b9d4f1" stroke-width="1"/>
<line x1="841.2" y1="483.6" x2="841.2" y2="700" stroke="#b9d4f1" stroke-width="1"/>
<line x1="353.3" y1="483.6" x2="353.3" y2="700" stroke="#b9d4f1" stroke-width="1"/>
<line x1="109.5" y1="513.6" x2="841.2" y2="513.6" stroke="#b9d4f1" stroke-width="1"/>
<line x1="230.7" y1="513.6" x2="230.7" y2="568" stroke="#b9d4f1" stroke-width="1"/>
<line x1="109.5" y1="541.3" x2="353.3" y2="541.3" stroke="#b9d4f1" stroke-width="1"/>
<line x1="455.6" y1="513.6" x2="455.6" y2="700" stroke="#b9d4f1" stroke-width="1"/>
<line x1="455.6" y1="541.3" x2="841.2" y2="541.3" stroke="#b9d4f1" stroke-width="1"/>
<line x1="109.5" y1="568" x2="353.3" y2="568" stroke="#8fe3cf" stroke-width="1"/>
<line x1="109.5" y1="594" x2="353.3" y2="594" stroke="#8fe3cf" stroke-width="1"/>
<line x1="353.3" y1="594" x2="841.2" y2="594" stroke="#b9d4f1" stroke-width="1"/>
<line x1="455.6" y1="621.5" x2="841.2" y2="621.5" stroke="#b9d4f1" stroke-width="1"/>
<text x="172.3" y="504.2" font-size="15.5" fill="#173f6b" font-weight="bold" font-family="Liberation Serif" letter-spacing="4.75">LANGUAGE</text>
<text x="141.8" y="586.2" font-size="15.5" fill="#173f6b" font-weight="bold" font-family="Liberation Serif" letter-spacing="5.06">ACHIEVEMENTS</text>
<text x="532.2" y="504.2" font-size="15.5" fill="#173f6b" font-weight="bold" font-family="Liberation Serif" letter-spacing="5.3">EDUCATION</text>
<rect x="170.5" y="490" width="2.2" height="17" fill="#173f6b"/>
<rect x="116.7" y="518.9" width="64" height="17" fill="#e3f1fd"/>
<text x="116.7" y="532.9" font-size="14" fill="#8f959b">Language</text>
<rect x="238.9" y="518.9" width="64" height="17" fill="#e3f1fd"/>
<text x="238.9" y="532.9" font-size="14" fill="#8f959b">Language</text>
<rect x="116.7" y="546.2" width="64" height="17" fill="#e3f1fd"/>
<text x="116.7" y="560.2" font-size="14" fill="#8f959b">Language</text>
<rect x="238.9" y="546.2" width="64" height="17" fill="#e3f1fd"/>
<text x="238.9" y="560.2" font-size="14" fill="#8f959b">Language</text>
<rect x="361.1" y="519.1" width="86" height="16.7" fill="#e3f1fd"/>
<text x="361.5" y="532.9" font-size="14.4" fill="#8f959b" textLength="85" lengthAdjust="spacingAndGlyphs">XXXX–XXXX</text>
<rect x="361.1" y="599" width="86" height="16.7" fill="#e3f1fd"/>
<text x="361.5" y="612.7" font-size="14.4" fill="#8f959b" textLength="85" lengthAdjust="spacingAndGlyphs">XXXX–XXXX</text>
<rect x="462" y="519.1" width="82" height="16.7" fill="#e3f1fd"/>
<text x="462.2" y="532.9" font-size="14" fill="#8f959b" font-weight="bold" textLength="80.5" lengthAdjust="spacingAndGlyphs">Institution 1</text>
<rect x="462" y="599" width="82" height="16.7" fill="#e3f1fd"/>
<text x="462.2" y="612.7" font-size="14" fill="#8f959b" font-weight="bold" textLength="80.5" lengthAdjust="spacingAndGlyphs">Institution 2</text>
<rect x="462" y="541.8" width="47.5" height="16" fill="#e3f1fd"/>
<text x="462.5" y="554.7" font-size="14.5" fill="#8f959b" textLength="46.5" lengthAdjust="spacingAndGlyphs">Degree</text>
<rect x="462" y="622" width="47.5" height="16" fill="#e3f1fd"/>
<text x="462.5" y="635" font-size="14.5" fill="#8f959b" textLength="46.5" lengthAdjust="spacingAndGlyphs">Degree</text>
<text x="115.6" y="620.9" font-size="14.4" fill="#8f959b">Achievements</text>
<rect x="531" y="468.7" width="100" height="19.8" fill="#922a00"/>
<text x="541" y="485.6" font-size="12.8" fill="#f8f0ec" textLength="79.3" lengthAdjust="spacing" stroke="#f8f0ec" stroke-width="0.3">Mark Pottato</text>
<rect x="531" y="488" width="2" height="17.8" fill="#922a00"/>
<rect x="921.5" y="147.5" width="12" height="12" fill="#f7f7f7" stroke="#cfcfcf" stroke-width="1"/>
<path d="M924.5,155.5 l3,-3.5 l3,3.5 z" fill="#999" stroke="none" stroke-width="1"/>
<rect x="921.5" y="161.5" width="12" height="490" fill="#f3f3f3" stroke="#cfcfcf" stroke-width="1"/>
<rect x="921.5" y="161.5" width="12" height="226" fill="#f3f3f3" stroke="#cfcfcf" stroke-width="1"/>
<line x1="925" y1="267.5" x2="930" y2="267.5" stroke="#c4c4c4" stroke-width="0.7"/>
<line x1="925" y1="270.0" x2="930" y2="270.0" stroke="#c4c4c4" stroke-width="0.7"/>
<line x1="925" y1="272.5" x2="930" y2="272.5" stroke="#c4c4c4" stroke-width="0.7"/>
<line x1="925" y1="275.0" x2="930" y2="275.0" stroke="#c4c4c4" stroke-width="0.7"/>
<line x1="925" y1="277.5" x2="930" y2="277.5" stroke="#c4c4c4" stroke-width="0.7"/>
<line x1="925" y1="280.0" x2="930" y2="280.0" stroke="#c4c4c4" stroke-width="0.7"/>
<rect x="921.5" y="654.5" width="12" height="12" fill="#f7f7f7" stroke="#cfcfcf" stroke-width="1"/>
<path d="M924.5,658.5 l3,3.5 l3,-3.5 z" fill="#999" stroke="none" stroke-width="1"/>
<rect x="1165" y="195" width="8" height="23.3" fill="#e4e4e4" rx="3"/>
<defs><filter id="sh" x="-5%" y="-5%" width="110%" height="110%"><feDropShadow dx="0.8" dy="0.8" stdDeviation="1.4" flood-color="#000" flood-opacity="0.13"/></filter><clipPath id="pc"><rect x="937.5" y="146" width="217.3" height="514" rx="8"/></clipPath></defs>
<rect x="937.5" y="146" width="217.3" height="514" fill="#fff" rx="8" filter="url(#sh)"/>
<g clip-path="url(#pc)">
<text x="949.5" y="165" font-size="11.6" fill="#333" font-weight="bold">Rows</text>
<text x="1046.6" y="165" font-size="11.6" fill="#333" font-weight="bold">Columns</text>
<rect x="949.5" y="172.3" width="13.6" height="13.6" fill="#4a86e8" rx="3"/>
<path d="M952.7,179.3 l2.6,2.6 l4.8,-5" fill="none" stroke="#fff" stroke-width="1.4"/>
<text x="971.4" y="184.2" font-size="12" fill="#333">Header</text>
<rect x="1046.6" y="172.3" width="13.6" height="13.6" fill="#4a86e8" rx="3"/>
<path d="M1049.8,179.3 l2.6,2.6 l4.8,-5" fill="none" stroke="#fff" stroke-width="1.4"/>
<text x="1068.6" y="184.2" font-size="12" fill="#333">First</text>
<rect x="950.0" y="198.9" width="12.6" height="12.6" fill="#fff" stroke="#bdbdbd" stroke-width="1" rx="3"/>
<text x="971.4" y="210" font-size="12" fill="#333">Total</text>
<rect x="1047.1" y="198.9" width="12.6" height="12.6" fill="#fff" stroke="#bdbdbd" stroke-width="1" rx="3"/>
<text x="1068.6" y="210" font-size="12" fill="#333">Last</text>
<rect x="949.5" y="225" width="13.6" height="13.6" fill="#4a86e8" rx="3"/>
<path d="M952.7,232 l2.6,2.6 l4.8,-5" fill="none" stroke="#fff" stroke-width="1.4"/>
<text x="971.4" y="236.5" font-size="12" fill="#333">Banded</text>
<rect x="1047.1" y="225.5" width="12.6" height="12.6" fill="#fff" stroke="#bdbdbd" stroke-width="1" rx="3"/>
<text x="1068.6" y="236.5" font-size="12" fill="#333">Banded</text>
<text x="949.5" y="262.1" font-size="12" fill="#333" font-weight="bold">Select from template</text>
<rect x="950" y="267.5" width="89.5" height="56" fill="#fff" stroke="#e3e3e3" stroke-width="1" rx="4"/>
<rect x="952.6" y="270" width="71" height="50.5" fill="#f2f2f2"/>
<rect x="954.5" y="272" width="67" height="46.5" fill="#fff" stroke="#111" stroke-width="1.3"/>
<line x1="967.8" y1="272" x2="967.8" y2="318.5" stroke="#111" stroke-width="1.1"/>
<line x1="981.5" y1="272" x2="981.5" y2="318.5" stroke="#111" stroke-width="1.1"/>
<line x1="994.5" y1="272" x2="994.5" y2="318.5" stroke="#111" stroke-width="1.1"/>
<line x1="1008.5" y1="272" x2="1008.5" y2="318.5" stroke="#111" stroke-width="1.1"/>
<line x1="954.5" y1="281.3" x2="1021.5" y2="281.3" stroke="#111" stroke-width="1.1"/>
<line x1="954.5" y1="290.6" x2="1021.5" y2="290.6" stroke="#111" stroke-width="1.1"/>
<line x1="954.5" y1="299.9" x2="1021.5" y2="299.9" stroke="#111" stroke-width="1.1"/>
<line x1="954.5" y1="309.2" x2="1021.5" y2="309.2" stroke="#111" stroke-width="1.1"/>
<line x1="957.15" y1="276.65" x2="965.15" y2="276.65" stroke="#444" stroke-width="1.1"/>
<line x1="957.15" y1="285.95000000000005" x2="965.15" y2="285.95000000000005" stroke="#444" stroke-width="1.1"/>
<line x1="957.15" y1="295.25" x2="965.15" y2="295.25" stroke="#444" stroke-width="1.1"/>
<line x1="957.15" y1="304.54999999999995" x2="965.15" y2="304.54999999999995" stroke="#444" stroke-width="1.1"/>
<line x1="957.15" y1="313.85" x2="965.15" y2="313.85" stroke="#444" stroke-width="1.1"/>
<line x1="970.65" y1="276.65" x2="978.65" y2="276.65" stroke="#444" stroke-width="1.1"/>
<line x1="970.65" y1="285.95000000000005" x2="978.65" y2="285.95000000000005" stroke="#444" stroke-width="1.1"/>
<line x1="970.65" y1="295.25" x2="978.65" y2="295.25" stroke="#444" stroke-width="1.1"/>
<line x1="970.65" y1="304.54999999999995" x2="978.65" y2="304.54999999999995" stroke="#444" stroke-width="1.1"/>
<line x1="970.65" y1="313.85" x2="978.65" y2="313.85" stroke="#444" stroke-width="1.1"/>
<line x1="984.0" y1="276.65" x2="992.0" y2="276.65" stroke="#444" stroke-width="1.1"/>
<line x1="984.0" y1="285.95000000000005" x2="992.0" y2="285.95000000000005" stroke="#444" stroke-width="1.1"/>
<line x1="984.0" y1="295.25" x2="992.0" y2="295.25" stroke="#444" stroke-width="1.1"/>
<line x1="984.0" y1="304.54999999999995" x2="992.0" y2="304.54999999999995" stroke="#444" stroke-width="1.1"/>
<line x1="984.0" y1="313.85" x2="992.0" y2="313.85" stroke="#444" stroke-width="1.1"/>
<line x1="997.5" y1="276.65" x2="1005.5" y2="276.65" stroke="#444" stroke-width="1.1"/>
<line x1="997.5" y1="285.95000000000005" x2="1005.5" y2="285.95000000000005" stroke="#444" stroke-width="1.1"/>
<line x1="997.5" y1="295.25" x2="1005.5" y2="295.25" stroke="#444" stroke-width="1.1"/>
<line x1="997.5" y1="304.54999999999995" x2="1005.5" y2="304.54999999999995" stroke="#444" stroke-width="1.1"/>
<line x1="997.5" y1="313.85" x2="1005.5" y2="313.85" stroke="#444" stroke-width="1.1"/>
<line x1="1011.0" y1="276.65" x2="1019.0" y2="276.65" stroke="#444" stroke-width="1.1"/>
<line x1="1011.0" y1="285.95000000000005" x2="1019.0" y2="285.95000000000005" stroke="#444" stroke-width="1.1"/>
<line x1="1011.0" y1="295.25" x2="1019.0" y2="295.25" stroke="#444" stroke-width="1.1"/>
<line x1="1011.0" y1="304.54999999999995" x2="1019.0" y2="304.54999999999995" stroke="#444" stroke-width="1.1"/>
<line x1="1011.0" y1="313.85" x2="1019.0" y2="313.85" stroke="#444" stroke-width="1.1"/>
<path d="M1028.8,295.2 l3,3 l3,-3" fill="none" stroke="#888" stroke-width="1.1"/>
<line x1="949.5" y1="332.3" x2="1143" y2="332.3" stroke="#e6e6e6" stroke-width="1"/>
<text x="949.5" y="355.1" font-size="12" fill="#333" font-weight="bold">Borders style</text>
<rect x="950.5" y="368" width="90" height="22" fill="#fff" stroke="#dcdcdc" stroke-width="1" rx="3"/>
<line x1="960" y1="378.8" x2="1020" y2="378.8" stroke="#666" stroke-width="1"/>
<path d="M1029.6,377.6 l2.7,3.0 l2.7,-3.0" fill="none" stroke="#555" stroke-width="1.2"/>
<text x="1060.6" y="383.7" font-size="12" fill="#333">Color</text>
<rect x="1094.5" y="368" width="48.5" height="22" fill="#fff" stroke="#dcdcdc" stroke-width="1" rx="3"/>
<rect x="1095.8" y="368.8" width="31" height="20" fill="#000" rx="3.5"/>
<path d="M1131.7,377.2 l2.9,3.7 l2.9,-3.7" fill="none" stroke="#555" stroke-width="1.2"/>
<text x="949.5" y="412.3" font-size="11.7" fill="#333" textLength="181.5" lengthAdjust="spacingAndGlyphs">Select borders you want to change</text>
<text x="949.5" y="430" font-size="11.7" fill="#333">applying style chosen above</text>
<line x1="954.3" y1="447" x2="969.0" y2="447" stroke="#4a7bd0" stroke-width="1.3"/>
<line x1="954.3" y1="461.7" x2="969.0" y2="461.7" stroke="#4a7bd0" stroke-width="1.3"/>
<line x1="954.3" y1="447" x2="954.3" y2="461.7" stroke="#4a7bd0" stroke-width="1.3"/>
<line x1="969.0" y1="447" x2="969.0" y2="461.7" stroke="#4a7bd0" stroke-width="1.3"/>
<line x1="961.65" y1="447" x2="961.65" y2="461.7" stroke="#4a7bd0" stroke-width="1.3"/>
<line x1="954.3" y1="454.35" x2="969.0" y2="454.35" stroke="#4a7bd0" stroke-width="1.3"/>
<line x1="982.2" y1="447" x2="996.9000000000001" y2="447" stroke="#7a7a7a" stroke-width="1.1" stroke-dasharray="2.9,2.9,3.1,2.9,2.9,100"/>
<line x1="982.2" y1="461.7" x2="996.9000000000001" y2="461.7" stroke="#7a7a7a" stroke-width="1.1" stroke-dasharray="2.9,2.9,3.1,2.9,2.9,100"/>
<line x1="982.2" y1="447" x2="982.2" y2="461.7" stroke="#7a7a7a" stroke-width="1.1" stroke-dasharray="2.9,2.9,3.1,2.9,2.9,100"/>
<line x1="996.9000000000001" y1="447" x2="996.9000000000001" y2="461.7" stroke="#7a7a7a" stroke-width="1.1" stroke-dasharray="2.9,2.9,3.1,2.9,2.9,100"/>
<line x1="989.5500000000001" y1="447" x2="989.5500000000001" y2="461.7" stroke="#7a7a7a" stroke-width="1.1" stroke-dasharray="1.4,3.45,5,3.45,1.4,100"/>
<line x1="982.2" y1="454.35" x2="996.9000000000001" y2="454.35" stroke="#7a7a7a" stroke-width="1.1" stroke-dasharray="1.4,3.45,5,3.45,1.4,100"/>
<line x1="1010.1" y1="447" x2="1024.8" y2="447" stroke="#7a7a7a" stroke-width="1.1" stroke-dasharray="2.9,2.9,3.1,2.9,2.9,100"/>
<line x1="1010.1" y1="461.7" x2="1024.8" y2="461.7" stroke="#7a7a7a" stroke-width="1.1" stroke-dasharray="2.9,2.9,3.1,2.9,2.9,100"/>
<line x1="1010.1" y1="447" x2="1010.1" y2="461.7" stroke="#7a7a7a" stroke-width="1.1" stroke-dasharray="2.9,2.9,3.1,2.9,2.9,100"/>
<line x1="1024.8" y1="447" x2="1024.8" y2="461.7" stroke="#7a7a7a" stroke-width="1.1" stroke-dasharray="2.9,2.9,3.1,2.9,2.9,100"/>
<line x1="1017.45" y1="447" x2="1017.45" y2="461.7" stroke="#4a7bd0" stroke-width="1.3"/>
<line x1="1010.1" y1="454.35" x2="1024.8" y2="454.35" stroke="#4a7bd0" stroke-width="1.3"/>
<line x1="1038" y1="447" x2="1052.7" y2="447" stroke="#4a7bd0" stroke-width="1.3"/>
<line x1="1038" y1="461.7" x2="1052.7" y2="461.7" stroke="#4a7bd0" stroke-width="1.3"/>
<line x1="1038" y1="447" x2="1038" y2="461.7" stroke="#4a7bd0" stroke-width="1.3"/>
<line x1="1052.7" y1="447" x2="1052.7" y2="461.7" stroke="#4a7bd0" stroke-width="1.3"/>
<line x1="1045.35" y1="447" x2="1045.35" y2="461.7" stroke="#7a7a7a" stroke-width="1.1" stroke-dasharray="1.4,3.45,5,3.45,1.4,100"/>
<line x1="1038" y1="454.35" x2="1052.7" y2="454.35" stroke="#7a7a7a" stroke-width="1.1" stroke-dasharray="1.4,3.45,5,3.45,1.4,100"/>
<line x1="954.3" y1="479.5" x2="969.0" y2="479.5" stroke="#7a7a7a" stroke-width="1.1" stroke-dasharray="2.9,2.9,3.1,2.9,2.9,100"/>
<line x1="954.3" y1="494.2" x2="969.0" y2="494.2" stroke="#7a7a7a" stroke-width="1.1" stroke-dasharray="2.9,2.9,3.1,2.9,2.9,100"/>
<line x1="954.3" y1="479.5" x2="954.3" y2="494.2" stroke="#4a7bd0" stroke-width="1.3"/>
<line x1="969.0" y1="479.5" x2="969.0" y2="494.2" stroke="#7a7a7a" stroke-width="1.1" stroke-dasharray="2.9,2.9,3.1,2.9,2.9,100"/>
<line x1="961.65" y1="479.5" x2="961.65" y2="494.2" stroke="#7a7a7a" stroke-width="1.1" stroke-dasharray="1.4,3.45,5,3.45,1.4,100"/>
<line x1="954.3" y1="486.85" x2="969.0" y2="486.85" stroke="#7a7a7a" stroke-width="1.1" stroke-dasharray="1.4,3.45,5,3.45,1.4,100"/>
<line x1="982.2" y1="479.5" x2="996.9000000000001" y2="479.5" stroke="#7a7a7a" stroke-width="1.1" stroke-dasharray="2.9,2.9,3.1,2.9,2.9,100"/>
<line x1="982.2" y1="494.2" x2="996.9000000000001" y2="494.2" stroke="#7a7a7a" stroke-width="1.1" stroke-dasharray="2.9,2.9,3.1,2.9,2.9,100"/>
<line x1="982.2" y1="479.5" x2="982.2" y2="494.2" stroke="#7a7a7a" stroke-width="1.1" stroke-dasharray="2.9,2.9,3.1,2.9,2.9,100"/>
<line x1="996.9000000000001" y1="479.5" x2="996.9000000000001" y2="494.2" stroke="#7a7a7a" stroke-width="1.1" stroke-dasharray="2.9,2.9,3.1,2.9,2.9,100"/>
<line x1="989.5500000000001" y1="479.5" x2="989.5500000000001" y2="494.2" stroke="#4a7bd0" stroke-width="1.3"/>
<line x1="982.2" y1="486.85" x2="996.9000000000001" y2="486.85" stroke="#7a7a7a" stroke-width="1.1" stroke-dasharray="1.4,3.45,5,3.45,1.4,100"/>
<line x1="1010.1" y1="479.5" x2="1024.8" y2="479.5" stroke="#7a7a7a" stroke-width="1.1" stroke-dasharray="2.9,2.9,3.1,2.9,2.9,100"/>
<line x1="1010.1" y1="494.2" x2="1024.8" y2="494.2" stroke="#7a7a7a" stroke-width="1.1" stroke-dasharray="2.9,2.9,3.1,2.9,2.9,100"/>
<line x1="1010.1" y1="479.5" x2="1010.1" y2="494.2" stroke="#7a7a7a" stroke-width="1.1" stroke-dasharray="2.9,2.9,3.1,2.9,2.9,100"/>
<line x1="1024.8" y1="479.5" x2="1024.8" y2="494.2" stroke="#4a7bd0" stroke-width="1.3"/>
<line x1="1017.45" y1="479.5" x2="1017.45" y2="494.2" stroke="#7a7a7a" stroke-width="1.1" stroke-dasharray="1.4,3.45,5,3.45,1.4,100"/>
<line x1="1010.1" y1="486.85" x2="1024.8" y2="486.85" stroke="#7a7a7a" stroke-width="1.1" stroke-dasharray="1.4,3.45,5,3.45,1.4,100"/>
<line x1="1038" y1="479.5" x2="1052.7" y2="479.5" stroke="#4a7bd0" stroke-width="1.3"/>
<line x1="1038" y1="494.2" x2="1052.7" y2="494.2" stroke="#7a7a7a" stroke-width="1.1" stroke-dasharray="2.9,2.9,3.1,2.9,2.9,100"/>
<line x1="1038" y1="479.5" x2="1038" y2="494.2" stroke="#7a7a7a" stroke-width="1.1" stroke-dasharray="2.9,2.9,3.1,2.9,2.9,100"/>
<line x1="1052.7" y1="479.5" x2="1052.7" y2="494.2" stroke="#7a7a7a" stroke-width="1.1" stroke-dasharray="2.9,2.9,3.1,2.9,2.9,100"/>
<line x1="1045.35" y1="479.5" x2="1045.35" y2="494.2" stroke="#7a7a7a" stroke-width="1.1" stroke-dasharray="1.4,3.45,5,3.45,1.4,100"/>
<line x1="1038" y1="486.85" x2="1052.7" y2="486.85" stroke="#7a7a7a" stroke-width="1.1" stroke-dasharray="1.4,3.45,5,3.45,1.4,100"/>
<line x1="1065.9" y1="479.5" x2="1080.6000000000001" y2="479.5" stroke="#7a7a7a" stroke-width="1.1" stroke-dasharray="2.9,2.9,3.1,2.9,2.9,100"/>
<line x1="1065.9" y1="494.2" x2="1080.6000000000001" y2="494.2" stroke="#7a7a7a" stroke-width="1.1" stroke-dasharray="2.9,2.9,3.1,2.9,2.9,100"/>
<line x1="1065.9" y1="479.5" x2="1065.9" y2="494.2" stroke="#7a7a7a" stroke-width="1.1" stroke-dasharray="2.9,2.9,3.1,2.9,2.9,100"/>
<line x1="1080.6000000000001" y1="479.5" x2="1080.6000000000001" y2="494.2" stroke="#7a7a7a" stroke-width="1.1" stroke-dasharray="2.9,2.9,3.1,2.9,2.9,100"/>
<line x1="1073.25" y1="479.5" x2="1073.25" y2="494.2" stroke="#7a7a7a" stroke-width="1.1" stroke-dasharray="1.4,3.45,5,3.45,1.4,100"/>
<line x1="1065.9" y1="486.85" x2="1080.6000000000001" y2="486.85" stroke="#4a7bd0" stroke-width="1.3"/>
<line x1="1093.8" y1="479.5" x2="1108.5" y2="479.5" stroke="#7a7a7a" stroke-width="1.1" stroke-dasharray="2.9,2.9,3.1,2.9,2.9,100"/>
<line x1="1093.8" y1="494.2" x2="1108.5" y2="494.2" stroke="#4a7bd0" stroke-width="1.3"/>
<line x1="1093.8" y1="479.5" x2="1093.8" y2="494.2" stroke="#7a7a7a" stroke-width="1.1" stroke-dasharray="2.9,2.9,3.1,2.9,2.9,100"/>
<line x1="1108.5" y1="479.5" x2="1108.5" y2="494.2" stroke="#7a7a7a" stroke-width="1.1" stroke-dasharray="2.9,2.9,3.1,2.9,2.9,100"/>
<line x1="1101.1499999999999" y1="479.5" x2="1101.1499999999999" y2="494.2" stroke="#7a7a7a" stroke-width="1.1" stroke-dasharray="1.4,3.45,5,3.45,1.4,100"/>
<line x1="1093.8" y1="486.85" x2="1108.5" y2="486.85" stroke="#7a7a7a" stroke-width="1.1" stroke-dasharray="1.4,3.45,5,3.45,1.4,100"/>
<text x="949.5" y="524.9" font-size="11.8" fill="#333">Background Color</text>
<rect x="1048.5" y="508.5" width="48.5" height="22" fill="#fff" stroke="#dcdcdc" stroke-width="1" rx="3"/>
<rect x="1050" y="510" width="31" height="19" fill="#c8e1f9" rx="3.5"/>
<path d="M1086.0,517.5 l2.9,3.5 l2.9,-3.5" fill="none" stroke="#555" stroke-width="1.2"/>
<line x1="949.5" y1="540" x2="1143" y2="540" stroke="#e6e6e6" stroke-width="1"/>
<rect x="953.5" y="555" width="15.3" height="12.5" fill="none" stroke="#555" stroke-width="1.1" rx="1"/>
<line x1="953.5" y1="559.2" x2="968.8" y2="559.2" stroke="#555" stroke-width="1"/>
<line x1="953.5" y1="563.3" x2="968.8" y2="563.3" stroke="#555" stroke-width="1"/>
<line x1="958.6" y1="555" x2="958.6" y2="567.5" stroke="#555" stroke-width="1"/>
<line x1="963.7" y1="555" x2="963.7" y2="567.5" stroke="#555" stroke-width="1"/>
<text x="977.4" y="565" font-size="12" fill="#505050" textLength="87" lengthAdjust="spacingAndGlyphs">Rows &amp; columns</text>
<path d="M1073.6,559.0 l2.6,3.0 l2.6,-3.0" fill="none" stroke="#555" stroke-width="1.2"/>
<line x1="949.5" y1="580.7" x2="1143" y2="580.7" stroke="#e6e6e6" stroke-width="1"/>
<text x="949.5" y="602.8" font-size="11.6" fill="#333" font-weight="bold">Rows &amp; columns size</text>
<text x="949.5" y="624" font-size="12" fill="#333">Height</text>
<rect x="1027.5" y="607.5" width="87.5" height="23" fill="#fff" stroke="#dcdcdc" stroke-width="1" rx="4"/>
<text x="1096.4" y="624" font-size="12" fill="#333" text-anchor="end">0.32 "</text>
<path d="M1103.5,615 l3,-3 l3,3 M1103.5,623.5 l3,3 l3,-3" fill="none" stroke="#555" stroke-width="1"/>
<rect x="1124.5" y="612.5" width="7" height="14" fill="none" stroke="#555" stroke-width="1.2" rx="1"/>
<line x1="1124.5" y1="619.5" x2="1131.5" y2="619.5" stroke="#555" stroke-width="1.1"/>
<path d="M1135.8,613 v13 M1133.6,613 h4.4 M1133.6,619.5 h4.4 M1133.6,626 h4.4" fill="none" stroke="#4a7bd0" stroke-width="1.1"/>
<text x="949.5" y="655.6" font-size="12" fill="#333">Width</text>
<rect x="1027.5" y="639" width="87.5" height="23" fill="#fff" stroke="#dcdcdc" stroke-width="1" rx="4"/>
<path d="M1103.5,646.5 l3,-3 l3,3 M1103.5,654.5 l3,3 l3,-3" fill="none" stroke="#555" stroke-width="1"/>
<rect x="1124" y="650" width="14.2" height="6.8" fill="none" stroke="#555" stroke-width="1.2" rx="1"/>
<line x1="1131" y1="650" x2="1131" y2="656.8" stroke="#555" stroke-width="1.1"/>
<path d="M1124.5,645.2 h13.5 M1124.5,643 v4.4 M1131.2,643 v4.4 M1138,643 v4.4" fill="none" stroke="#4a7bd0" stroke-width="1.1"/>
</g>
<rect x="0" y="668" width="1170" height="32" fill="#fff"/>
<line x1="0" y1="668.5" x2="1170" y2="668.5" stroke="#dadada" stroke-width="1"/>
<line x1="42" y1="669" x2="42" y2="700" stroke="#e6e6e6" stroke-width="1"/>
<text x="35.5" y="687.7" font-size="11" fill="#333" text-anchor="end">e 1 of 1</text>
<line x1="54.4" y1="677.6" x2="65.9" y2="677.6" stroke="#555" stroke-width="1.2"/>
<line x1="54.4" y1="682.6" x2="65.9" y2="682.6" stroke="#555" stroke-width="1.2"/>
<text x="57.6" y="690.2" font-size="6.2" fill="#4a7bd0" font-weight="bold" text-anchor="middle">12</text>
<line x1="63.4" y1="687.6" x2="65.9" y2="687.6" stroke="#555" stroke-width="1.1"/>
<text x="77" y="688.2" font-size="12" fill="#333">Word count</text>
<line x1="734" y1="669" x2="734" y2="700" stroke="#e6e6e6" stroke-width="1"/>
<text x="743.4" y="689" font-size="11.5" fill="#333">English – United States</text>
<path d="M871.0,683.0 l2.8,3.5 l2.8,-3.5" fill="none" stroke="#555" stroke-width="1.2"/>
<circle cx="894.2" cy="684.2" r="7.5" fill="none" stroke="#333" stroke-width="1.1"/>
<ellipse cx="894.2" cy="684.2" rx="3.2" ry="7.5" fill="none" stroke="#333" stroke-width="1"/>
<line x1="886.7" y1="681.5" x2="901.7" y2="681.5" stroke="#333" stroke-width="1"/>
<line x1="886.7" y1="687" x2="901.7" y2="687" stroke="#333" stroke-width="1"/>
<rect x="910.3" y="672.2" width="23" height="23.1" fill="#e3e3e3" rx="3"/>
<path d="M925,690.8 h-10.3 v-13.4 h14.4 v9" fill="none" stroke="#444" stroke-width="1.1"/>
<text x="921.5" y="687.6" font-size="10.5" fill="#444" text-anchor="middle">A</text>
<path d="M923.5,689.5 l2.3,2.3 l4.5,-4.8" fill="none" stroke="#4a7bd0" stroke-width="1.2"/>
<line x1="940.3" y1="669" x2="940.3" y2="700" stroke="#e6e6e6" stroke-width="1"/>
<path d="M950.7,679.3 h8 M950.7,682.5 h6" fill="none" stroke="#4a7bd0" stroke-width="1.1"/>
<path d="M953.5,690 l1,-3.2 l8.5,-8.5 a1.3,1.3 0 0 1 1.9,0 l0.4,0.4 a1.3,1.3 0 0 1 0,1.9 l-8.5,8.5 z" fill="none" stroke="#444" stroke-width="1.1"/>
<path d="M975.5,683 l2.3,3.5 l2.3,-3.5" fill="none" stroke="#555" stroke-width="1.2"/>
<line x1="992.5" y1="669" x2="992.5" y2="700" stroke="#e6e6e6" stroke-width="1"/>
<rect x="1005.3" y="677.4" width="11.5" height="14.2" fill="none" stroke="#444" stroke-width="1.1" rx="1.5"/>
<path d="M1007.5,681 v-1.8 h1.8 M1012.8,679.2 h1.8 v1.8 M1007.5,688 v1.8 h1.8 M1012.8,689.8 h1.8 v-1.8" fill="none" stroke="#4a7bd0" stroke-width="1"/>
<path d="M1036.5,686 v-9.3 h12.2 v9.3" fill="none" stroke="#444" stroke-width="1.1"/>
<path d="M1036.5,689.8 h4.5 M1038.5,687.8 l-2,2 l2,2 M1044.2,689.8 h4.5 M1046.7,687.8 l2,2 l-2,2" fill="none" stroke="#4a7bd0" stroke-width="1"/>
<line x1="1067.6" y1="683.5" x2="1079.7" y2="683.5" stroke="#444" stroke-width="1.2"/>
<text x="1097" y="688.4" font-size="11" fill="#333" textLength="57" lengthAdjust="spacingAndGlyphs">Zoom 100%</text>
</svg>
</body></html>
